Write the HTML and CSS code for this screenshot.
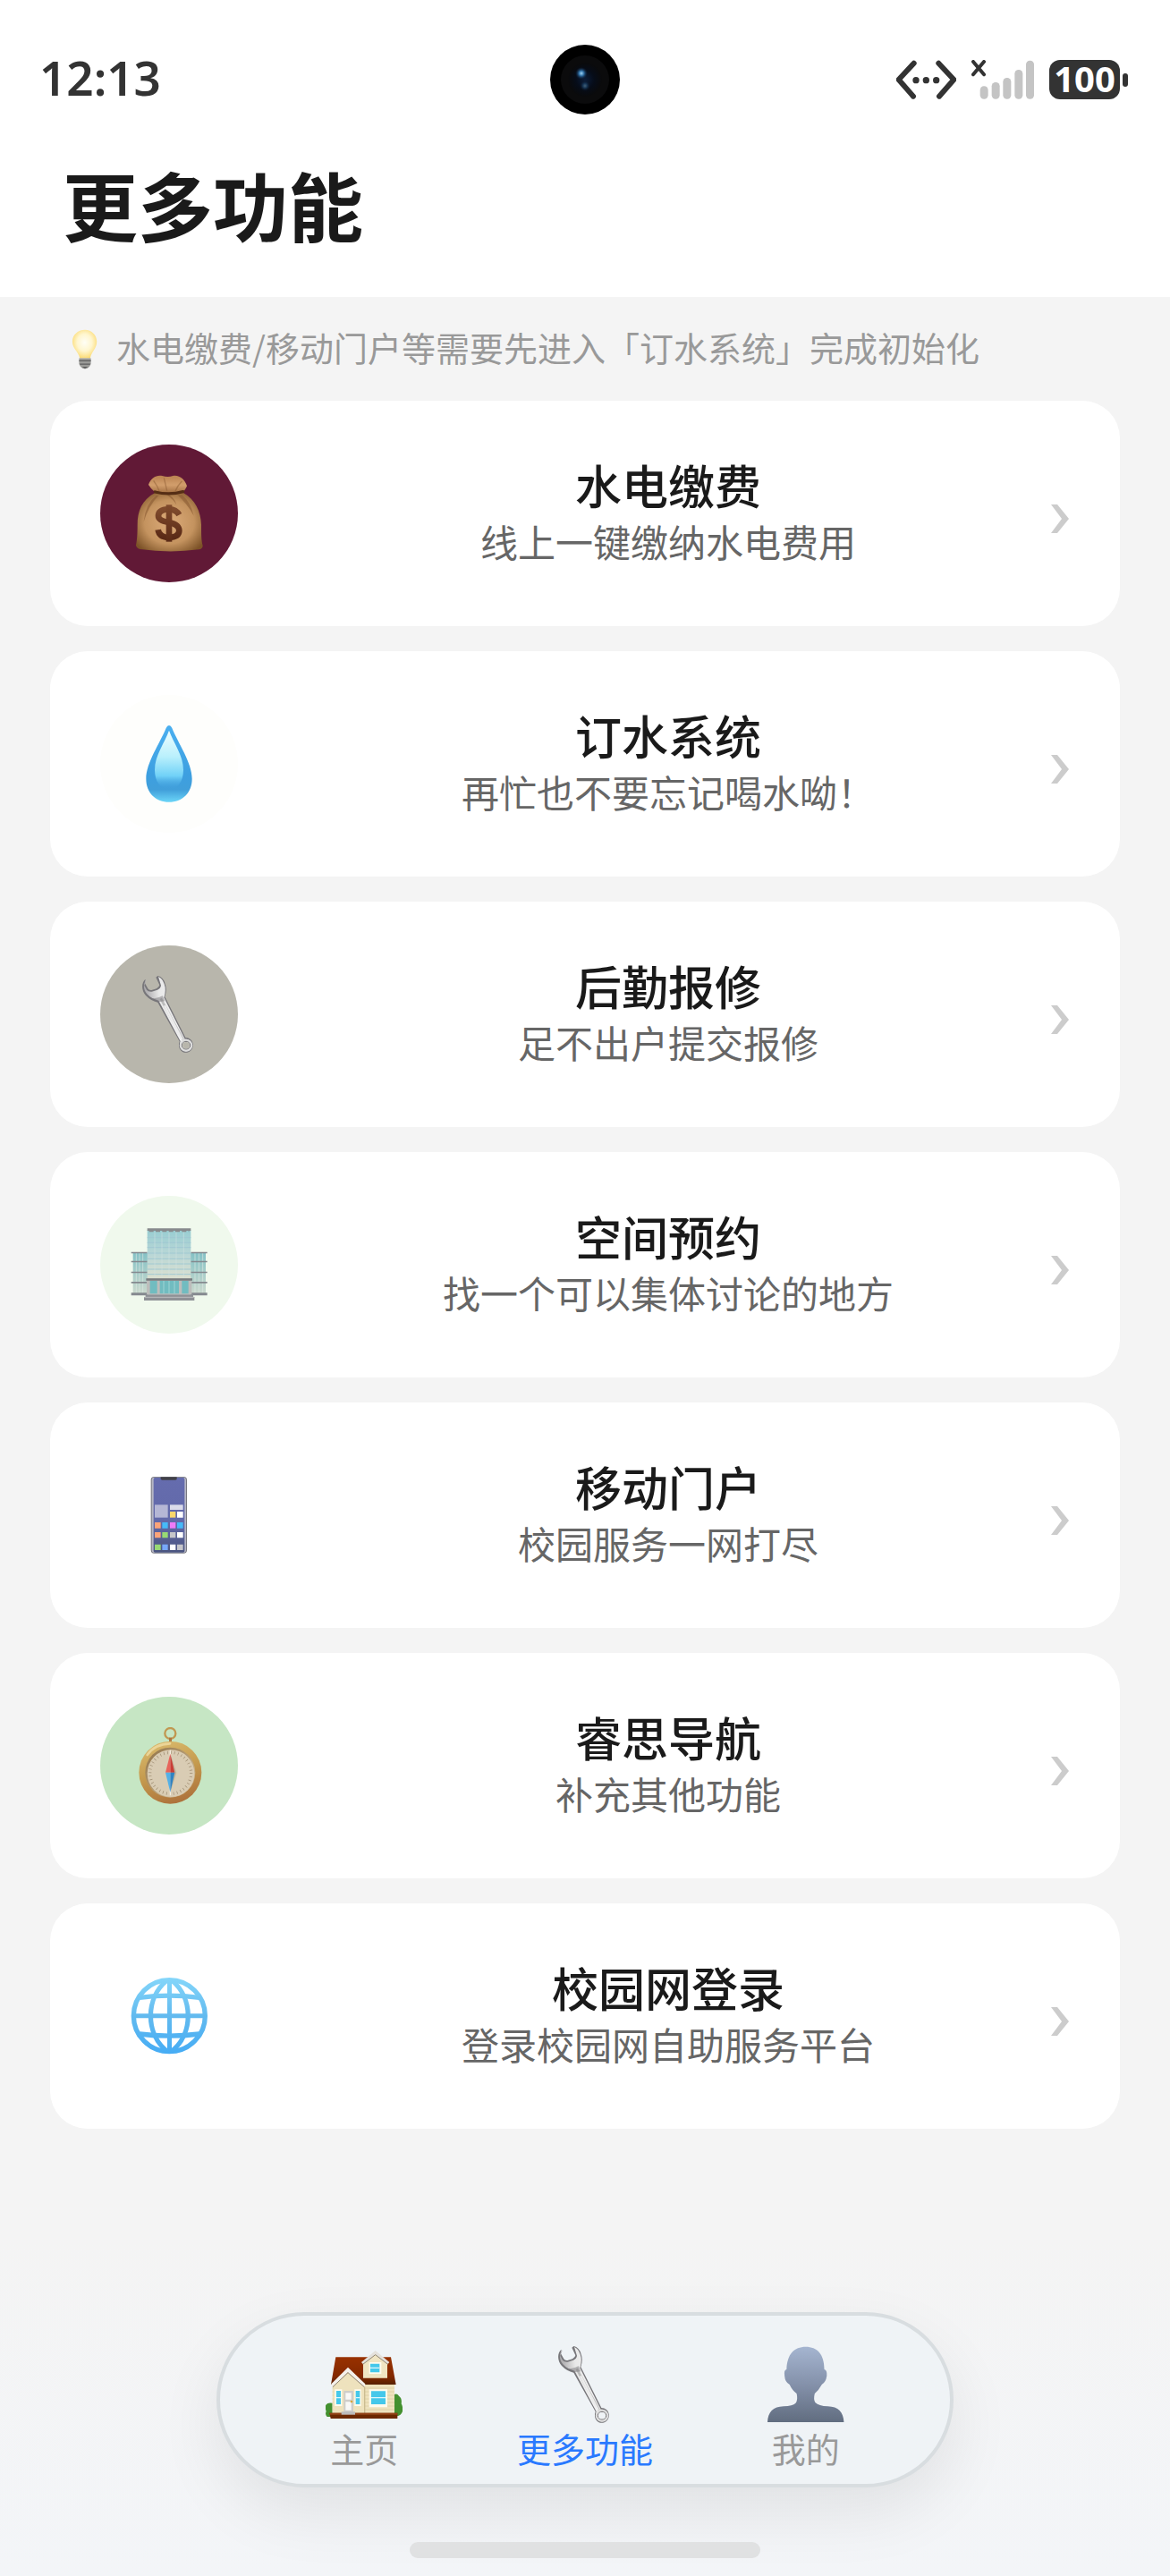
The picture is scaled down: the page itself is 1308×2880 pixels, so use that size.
FILE: index.html
```html
<!DOCTYPE html>
<html lang="zh-CN">
<head>
<meta charset="utf-8">
<meta name="viewport" content="width=device-width, initial-scale=1">
<title>更多功能</title>
<link rel="stylesheet" href="styles.css">
</head>
<body>
<header class="header">
  <div class="status">
    <span class="time">12:13</span>
    <svg class="camera" viewBox="0 0 78 78" aria-hidden="true">
      <defs>
        <radialGradient id="lens"><stop offset="0" stop-color="#0b1c38"/><stop offset=".55" stop-color="#060c18"/><stop offset="1" stop-color="#0a0a0b"/></radialGradient>
        <radialGradient id="glint"><stop offset="0" stop-color="#9fd4f5"/><stop offset=".4" stop-color="#2f6fa5"/><stop offset="1" stop-color="#0b1c38" stop-opacity="0"/></radialGradient>
      </defs>
      <circle cx="39" cy="39" r="39" fill="#000"/>
      <circle cx="39" cy="39" r="27" fill="#0b0b0c"/>
      <circle cx="39" cy="39" r="19" fill="url(#lens)"/>
      <circle cx="35" cy="32" r="7" fill="url(#glint)"/>
      <circle cx="39" cy="46" r="6" fill="url(#glint)" opacity=".4"/>
    </svg>
    <div class="indicators">
      <svg class="network" viewBox="66 80 201 132" aria-hidden="true">
        <path d="M125 91 74 146 123 202M208 91 259 146 210 202" fill="none" stroke="#333" stroke-width="18" stroke-linecap="round" stroke-linejoin="round"/>
        <g fill="#333"><circle cx="132" cy="148" r="11"/><circle cx="166" cy="148" r="11"/><circle cx="200" cy="148" r="11"/></g>
      </svg>
      <svg class="signal" viewBox="318 80 210 132" aria-hidden="true">
        <path d="M324 86 360 129M360 86 324 129" stroke="#333" stroke-width="12" stroke-linecap="round"/>
        <g fill="#c4c4c4"><rect x="347" y="168" width="27" height="43" rx="13"/><rect x="386" y="155" width="27" height="56" rx="13"/><rect x="424" y="140" width="27" height="71" rx="13"/><rect x="463" y="113" width="27" height="98" rx="13"/><rect x="501" y="82" width="27" height="129" rx="13"/></g>
      </svg>
      <div class="battery"><span class="battery-level">100</span><span class="battery-tip"></span></div>
    </div>
  </div>
  <h1 class="page-title">更多功能</h1>
</header>

<main class="content">
  <p class="hint">
    <svg class="bulb" viewBox="90 1105 46 136" preserveAspectRatio="none" aria-hidden="true">
      <defs><radialGradient id="bulbGlow" cx=".5" cy=".45" r=".6"><stop offset="0" stop-color="#fffef6"/><stop offset=".5" stop-color="#fff6cf"/><stop offset="1" stop-color="#fbd766"/></radialGradient></defs>
      <path d="M113 1107C103 1107 96 1125 96 1147C96 1170 104 1180 106 1203H120C122 1180 129 1170 129 1147C129 1125 122 1107 113 1107Z" fill="url(#bulbGlow)"/>
      <path d="M105 1203H121V1222Q119 1238 113 1239Q107 1238 105 1222Z" fill="#9b9b98"/>
      <path d="M105 1210H121V1214H105ZM106 1221H120V1225H106ZM109 1232H117L113 1239Z" fill="#5e5e5e"/>
    </svg>
    <span>水电缴费/移动门户等需要先进入「订水系统」完成初始化</span>
  </p>

  <ul class="cards">
    <li><a class="card" href="#pay">
      <span class="badge badge-wine"><svg class="emoji" viewBox="168 153 258 258" aria-hidden="true">
        <defs>
          <radialGradient id="bag" cx=".5" cy=".5" r=".62"><stop offset="0" stop-color="#dcab7a"/><stop offset=".6" stop-color="#c4935f"/><stop offset="1" stop-color="#7c5227"/></radialGradient>
          <linearGradient id="bagTop" x1="0" y1="0" x2="0" y2="1"><stop offset="0" stop-color="#b98250"/><stop offset=".5" stop-color="#d29e6c"/><stop offset="1" stop-color="#9b683b"/></linearGradient>
          <linearGradient id="dollar" x1="0" y1="0" x2="0" y2="1"><stop offset="0" stop-color="#7f4a2c"/><stop offset="1" stop-color="#5a2a16"/></linearGradient>
        </defs>
        <path d="M250 213C206 236 191 275 191 320C191 350 190 370 186 388Q186 398 200 402Q298 416 398 403Q410 400 410 390C405 372 405 350 405 320C404 276 384 234 345 213Z" fill="url(#bag)"/>
        <path d="M254 222Q218 250 212 310Q229 255 262 222ZM340 220Q370 245 380 290Q358 250 325 220ZM298 220Q318 235 322 254Q314 238 290 220Z" fill="#8a5c33" opacity=".6"/>
        <path d="M228 186C235 164 254 152 274 156Q293 162 310 156C332 152 350 168 357 190Q354 198 343 213Q298 224 251 212Q236 200 228 186Z" fill="url(#bagTop)"/>
        <path d="M245 172Q258 190 264 206M280 163L290 206M340 174Q326 188 318 207" fill="none" stroke="#8b5c32" stroke-width="4" opacity=".5"/>
        <path d="M250 210Q298 222 344 209" fill="none" stroke="#552e15" stroke-width="10" stroke-linecap="round"/>
        <path d="M331 287Q320 267 295 268Q261 269 261 291Q261 306 296 312Q331 319 331 340Q330 362 295 363Q264 362 260 337" fill="none" stroke="url(#dollar)" stroke-width="20"/>
        <path d="M287 253H307V377H287Z" fill="url(#dollar)"/>
      </svg></span>
      <span class="card-text"><span class="card-title">水电缴费</span><span class="card-sub">线上一键缴纳水电费用</span></span>
      <svg class="chevron" viewBox="0 0 22 32" aria-hidden="true"><path d="M1 0H8L21 16 8 32H1L13 16Z" fill="#ccc"/></svg>
    </a></li>

    <li><a class="card" href="#water">
      <span class="badge badge-ivory"><svg class="emoji" viewBox="168 93 258 258" aria-hidden="true">
        <defs>
          <linearGradient id="dropOuter" x1="0" y1="0" x2="0" y2="1"><stop offset="0" stop-color="#4aaff0"/><stop offset=".65" stop-color="#3d9fe0"/><stop offset=".84" stop-color="#419fda"/><stop offset="1" stop-color="#6bd5f8"/></linearGradient>
          <linearGradient id="dropInner" x1="0" y1="0" x2="0" y2="1"><stop offset="0" stop-color="#f0feff"/><stop offset=".45" stop-color="#b9f0fc"/><stop offset=".78" stop-color="#70d1f7"/><stop offset="1" stop-color="#429fdd" stop-opacity="0"/></linearGradient>
        </defs>
        <path d="M297 93Q303 93 307 102C327 152 374 218 374 272C374 320 341 350 297 350C253 350 220 320 220 272C220 218 267 152 287 102Q291 93 297 93Z" fill="url(#dropOuter)"/>
        <path d="M297 110C311 150 345 193 345 242C345 283 325 306 297 306C269 306 249 283 249 242C249 193 283 150 297 110Z" fill="url(#dropInner)"/>
      </svg></span>
      <span class="card-text"><span class="card-title">订水系统</span><span class="card-sub">再忙也不要忘记喝水呦！</span></span>
      <svg class="chevron" viewBox="0 0 22 32" aria-hidden="true"><path d="M1 0H8L21 16 8 32H1L13 16Z" fill="#ccc"/></svg>
    </a></li>

    <li><a class="card" href="#repair">
      <span class="badge badge-stone"><svg class="emoji" viewBox="168 153 258 258" aria-hidden="true">
        <defs>
          <linearGradient id="steel" x1="0" y1=".2" x2="1" y2="0"><stop offset="0" stop-color="#a5a4a7"/><stop offset=".3" stop-color="#e8e8e8"/><stop offset=".65" stop-color="#f3f3f3"/><stop offset="1" stop-color="#b5b4b5"/></linearGradient>
          <symbol id="wrench" viewBox="168 153 258 258">
            <path d="M218 164C204 175 203 201 219 219Q236 237 259 242L332 373C326 389 333 406 348 410C365 413 380 398 377 381C375 368 365 361 352 360L283 223Q291 199 284 180Q278 157 259 153L253 158L265 184Q264 191 255 196L238 201Q230 202 226 196L216 178Z" fill="#77767a"/>
            <path d="M222 165C210 177 209 199 223 214Q237 230 262 236L335 372C330 387 337 403 350 406C364 408 376 397 374 383C372 371 363 365 350 365L280 226Q288 200 281 181Q275 162 261 156L270 185Q269 195 258 200L239 206Q227 207 222 200L214 185Z" fill="url(#steel)"/>
            <path d="M269 229L344 367" stroke="#bbb" stroke-width="8"/>
            <path d="M282 253L341 367" stroke="#ececec" stroke-width="7"/>
            <path d="M235 227Q255 232 275 220L283 238L264 240Z" fill="#77767a" opacity=".5"/>
            <ellipse cx="354" cy="386" rx="18" ry="17" fill="none" stroke="#ddd" stroke-width="8"/>
            <ellipse cx="354" cy="386" rx="14" ry="13" fill="none" stroke="#747376" stroke-width="3"/>
            <ellipse cx="354" cy="386" rx="12" ry="11" fill="var(--hole)"/>
          </symbol>
        </defs>
        <use href="#wrench" x="168" y="153" width="258" height="258"/>
      </svg></span>
      <span class="card-text"><span class="card-title">后勤报修</span><span class="card-sub">足不出户提交报修</span></span>
      <svg class="chevron" viewBox="0 0 22 32" aria-hidden="true"><path d="M1 0H8L21 16 8 32H1L13 16Z" fill="#ccc"/></svg>
    </a></li>

    <li><a class="card" href="#space">
      <span class="badge badge-mint"><svg class="emoji" viewBox="168 153 258 258" aria-hidden="true">
        <defs>
          <linearGradient id="tower" x1="0" y1="0" x2="0" y2="1"><stop offset="0" stop-color="#98cdd2"/><stop offset=".5" stop-color="#b9d7d6"/><stop offset="1" stop-color="#dce0cf"/></linearGradient>
          <linearGradient id="wing" x1="0" y1="0" x2="0" y2="1"><stop offset="0" stop-color="#84c1c5"/><stop offset="1" stop-color="#cad9cd"/></linearGradient>
        </defs>
        <path d="M176 242H420V378H176Z" fill="url(#wing)"/>
        <path d="M187 242V378M198 242V378M209 242V378M384 242V378M397 242V378M410 242V378" stroke="#e0eae5" stroke-width="3" opacity=".6"/>
        <path d="M170 239H224V244H170ZM170 269H224V274H170ZM170 305H224V310H170ZM170 339H224V344H170ZM170 376H224V385H170ZM370 239H425V244H370ZM370 269H425V274H370ZM370 305H425V310H370ZM370 339H425V344H370ZM370 376H425V385H370Z" fill="#85898f"/>
        <path d="M224 166H370V330H224Z" fill="url(#tower)"/>
        <path d="M224 191H370M224 208H370M224 224H370M224 243H370M224 262H370M224 279H370M224 297H370M224 314H370" stroke="#a0c8d2" stroke-width="3"/>
        <path d="M249 172V326M273 172V326M297 172V326M321 172V326M346 172V326" stroke="#d4e4e4" stroke-width="3" opacity=".5"/>
        <path d="M224 160H370V168H224Z" fill="#878a8d"/>
        <path d="M230 170H364" stroke="#878a8d" stroke-width="4" stroke-dasharray="15 7"/>
        <path d="M222 328H373V382H222Z" fill="#bdbdbb"/>
        <path d="M220 328H375V335H220Z" fill="#777b7e"/>
        <path d="M233 336H257V379H233ZM266 336H330V379H266ZM340 336H362V379H340Z" fill="#71bcc0"/>
        <path d="M279 336V379M297 336V379M315 336V379" stroke="#a0d4d5" stroke-width="3"/>
        <path d="M218 382H378V390H382V402H213V390H218Z" fill="#8f9196"/>
        <path d="M214 391H382" stroke="#bcbdbe" stroke-width="3"/>
      </svg></span>
      <span class="card-text"><span class="card-title">空间预约</span><span class="card-sub">找一个可以集体讨论的地方</span></span>
      <svg class="chevron" viewBox="0 0 22 32" aria-hidden="true"><path d="M1 0H8L21 16 8 32H1L13 16Z" fill="#ccc"/></svg>
    </a></li>

    <li><a class="card" href="#portal">
      <span class="badge"><svg class="emoji" viewBox="168 153 258 258" aria-hidden="true">
        <defs><linearGradient id="screen" x1="0" y1="0" x2="0" y2="1"><stop offset="0" stop-color="#656cae"/><stop offset=".6" stop-color="#6269a9"/><stop offset="1" stop-color="#4b557f"/></linearGradient></defs>
        <rect x="236" y="153" width="121" height="257" rx="11" fill="#77777f"/>
        <rect x="239" y="155" width="115" height="253" rx="9" fill="#b5b6c4"/>
        <rect x="245" y="156" width="104" height="251" rx="5" fill="url(#screen)"/>
        <path d="M269 154H323V160Q323 164 318 164H274Q269 164 269 160Z" fill="#414148"/>
        <path d="M249 247H293V290H249Z" fill="#b5b7d5"/><path d="M300 247H344V264H300Z" fill="#dadbea"/>
        <path d="M300 270H319V290H300Z" fill="#fbd76b"/>
        <path d="M324 270H344V290H324ZM324 339H344V358H324ZM300 380H319V399H300Z" fill="#fff"/>
        <path d="M249 306H269V326H249ZM249 339H269V358H249Z" fill="#fba47a"/>
        <path d="M274 306H293V326H274ZM324 306H344V326H324Z" fill="#46baf8"/>
        <path d="M300 306H319V326H300Z" fill="#ef7cf8"/>
        <path d="M274 339H293V358H274ZM249 380H269V399H249Z" fill="#98da74"/>
        <path d="M300 339H319V358H300ZM324 380H344V399H324Z" fill="#c6c6ca"/>
        <path d="M274 380H293V399H274Z" fill="#77a8fa"/>
      </svg></span>
      <span class="card-text"><span class="card-title">移动门户</span><span class="card-sub">校园服务一网打尽</span></span>
      <svg class="chevron" viewBox="0 0 22 32" aria-hidden="true"><path d="M1 0H8L21 16 8 32H1L13 16Z" fill="#ccc"/></svg>
    </a></li>

    <li><a class="card" href="#nav">
      <span class="badge badge-green"><svg class="emoji" viewBox="168 153 258 258" aria-hidden="true">
        <defs>
          <linearGradient id="brass" x1=".3" y1="0" x2=".6" y2="1"><stop offset="0" stop-color="#d9b96c"/><stop offset=".5" stop-color="#c49a4e"/><stop offset="1" stop-color="#ad713b"/></linearGradient>
          <linearGradient id="rim" x1="0" y1="0" x2="1" y2="1"><stop offset="0" stop-color="#8f7146"/><stop offset="1" stop-color="#dbc7a2"/></linearGradient>
        </defs>
        <circle cx="301" cy="174" r="18" fill="none" stroke="#c19852" stroke-width="7"/>
        <path d="M297 188H306V204H297Z" fill="#ae7540"/>
        <circle cx="301" cy="305" r="105" fill="url(#brass)"/>
        <path d="M224 246Q250 209 300 208" fill="none" stroke="#f3e3ac" stroke-width="8" stroke-linecap="round" opacity=".7"/>
        <circle cx="301" cy="305" r="84" fill="url(#rim)"/>
        <circle cx="303" cy="308" r="79" fill="#d9ccb4"/>
        <circle cx="302" cy="307" r="69" fill="none" stroke="#9d8b70" stroke-width="10" stroke-dasharray="2 10"/>
        <path d="M304 250L322 306L303 366Z" fill="#a99b84" opacity=".5"/>
        <path d="M301 230V382" stroke="#f5eedf" stroke-width="4"/>
        <path d="M301 242L285 305H301Z" fill="#e7645b"/><path d="M301 242L316 305H301Z" fill="#c93d36"/>
        <path d="M301 371L285 305H301Z" fill="#55b0e6"/><path d="M301 371L316 305H301Z" fill="#2f82c2"/>
      </svg></span>
      <span class="card-text"><span class="card-title">睿思导航</span><span class="card-sub">补充其他功能</span></span>
      <svg class="chevron" viewBox="0 0 22 32" aria-hidden="true"><path d="M1 0H8L21 16 8 32H1L13 16Z" fill="#ccc"/></svg>
    </a></li>

    <li><a class="card" href="#login">
      <span class="badge"><svg class="emoji" viewBox="168 153 258 258" aria-hidden="true">
        <defs><linearGradient id="globe" gradientUnits="userSpaceOnUse" x1="0" y1="153" x2="0" y2="411"><stop offset="0" stop-color="#84d6fa"/><stop offset=".5" stop-color="#62baef"/><stop offset="1" stop-color="#45acf5"/></linearGradient></defs>
        <g fill="none" stroke="url(#globe)" stroke-width="16">
          <circle cx="298" cy="281" r="120"/>
          <path d="M290 162C217 222 217 340 290 400M306 162C379 222 379 340 306 400"/>
          <path d="M198 220Q298 207 398 220M198 342Q298 355 398 342"/>
          <path d="M177 274H419V289H177ZM291 160H306V402H291Z" fill="url(#globe)" stroke="none"/>
        </g>
      </svg></span>
      <span class="card-text"><span class="card-title">校园网登录</span><span class="card-sub">登录校园网自助服务平台</span></span>
      <svg class="chevron" viewBox="0 0 22 32" aria-hidden="true"><path d="M1 0H8L21 16 8 32H1L13 16Z" fill="#ccc"/></svg>
    </a></li>
  </ul>
</main>

<footer class="footer">
  <nav class="tabbar" aria-label="主导航">
    <a class="tab" href="#home">
      <svg class="emoji" viewBox="69 69 258 258" aria-hidden="true">
        <defs><linearGradient id="roof" x1="0" y1="0" x2="0" y2="1"><stop offset="0" stop-color="#983100"/><stop offset=".7" stop-color="#832800"/><stop offset="1" stop-color="#572100"/></linearGradient></defs>
        <path d="M70 266Q76 257 92 260V306H74Q66 299 71 288Q66 275 70 266ZM298 232Q308 225 315 236Q326 244 323 262Q330 276 327 288Q322 302 308 304L296 300Z" fill="#43902f"/>
        <path d="M92 190H300V298H92Z" fill="#eee2bd"/>
        <path d="M92 210H300M92 222H300M92 234H300M92 246H300M92 258H300M92 270H300M92 282H300" stroke="#d9ca9e" stroke-width="2"/>
        <path d="M103 106H288L305 198H200L145 164L87 198Z" fill="url(#roof)"/>
        <path d="M195 124L236 94L276 124V176H195Z" fill="#f0e5c3"/>
        <path d="M189 123L236 84L283 123L278 129L236 97L194 129Z" fill="#e4e1dc"/>
        <path d="M194 130L236 98L278 130" fill="none" stroke="#8f8676" stroke-width="3"/>
        <path d="M95 198L145 156L198 200V293H95Z" fill="#eee2bd"/>
        <path d="M88 196L144 140L202 196L200 206L144 157L93 205Z" fill="#f5f1ec"/>
        <path d="M93 206L144 158L200 207" fill="none" stroke="#8f8471" stroke-width="3"/>
        <path d="M200 206V294" stroke="#cbbd92" stroke-width="4"/>
        <path d="M215 123H256V162H215ZM215 214H276V274H215ZM100 214H124V270H100ZM166 214H188V270H166Z" fill="#fffbed"/>
        <path d="M219 128H250V157H219ZM222 220H270V264H222ZM105 219H120V264H105ZM170 219H184V264H170Z" fill="#45c8ea"/>
        <path d="M219 142H250M222 242H270M105 242H120M170 242H184" stroke="#dff7fb" stroke-width="4"/>
        <path d="M130 219H162V293H130Z" fill="#cfcdc9"/>
        <path d="M136 226H155V248H136ZM136 256H155V284H136Z" fill="#f8f8f6"/>
        <circle cx="156" cy="255" r="4" fill="#d9a63b"/>
        <path d="M82 293H310V312H86Z" fill="#6c2800"/><path d="M82 293H310V299H83Z" fill="#934216"/>
        <path d="M122 289H168V299H122Z" fill="#bbb"/>
      </svg>
      <span>主页</span>
    </a>
    <a class="tab tab-active" href="#more" aria-current="page">
      <svg class="emoji" viewBox="168 153 258 258" aria-hidden="true"><use href="#wrench" x="168" y="153" width="258" height="258"/></svg>
      <span>更多功能</span>
    </a>
    <a class="tab" href="#me">
      <svg class="emoji" viewBox="1136 189 153 258" preserveAspectRatio="none" aria-hidden="true">
        <defs><linearGradient id="person" x1="0" y1="0" x2="0" y2="1"><stop offset="0" stop-color="#a5b5d0"/><stop offset=".5" stop-color="#8491aa"/><stop offset="1" stop-color="#616d80"/></linearGradient></defs>
        <path d="M1212 191C1189 191 1175 216 1174 267Q1168 270 1170 289Q1171 311 1180 318Q1185 337 1194 348Q1197 370 1192 380Q1186 390 1168 391C1147 392 1137 410 1136 444H1288C1287 410 1277 392 1256 391Q1238 390 1231 378Q1227 368 1230 348Q1238 337 1244 318Q1252 311 1254 289Q1255 270 1249 267C1249 216 1235 191 1212 191Z" fill="url(#person)"/>
      </svg>
      <span>我的</span>
    </a>
  </nav>
  <div class="home-indicator"></div>
</footer>
</body>
</html>
```
FILE: styles.css
```css
* { box-sizing: border-box; }

body {
  margin: 0;
  min-height: 100vh;
  display: flex;
  flex-direction: column;
  background: #f4f4f4;
  color: #1a1a1a;
  font-family: "Noto Sans CJK SC", "Noto Sans", sans-serif;
}

a { color: inherit; text-decoration: none; }
svg { display: block; flex: none; }

.header {
  padding: 50px 44px 42px;
  background: #fff;
}

.status {
  display: grid;
  grid-template-columns: 1fr 78px 1fr;
  align-items: center;
}

.time {
  padding-bottom: 4px;
  font: 600 53px/74px "Noto Sans", sans-serif;
  color: #333;
}

.camera { width: 78px; height: 78px; }

.indicators {
  display: flex;
  justify-content: flex-end;
  align-items: center;
  gap: 17px;
  padding-right: 3px;
}

.network { width: 67px; height: 44px; }
.signal { width: 70px; height: 44px; }
.battery { display: flex; align-items: center; gap: 3px; }

.battery-level {
  width: 79px;
  height: 44px;
  border-radius: 12px;
  background: #333;
  color: #fff;
  font: 700 40px/42px "Noto Sans", sans-serif;
  text-align: center;
}

.battery-tip {
  width: 6px;
  height: 15px;
  border-radius: 3px;
  background: #333;
}

.page-title {
  margin: 38px 0 0;
  padding-left: 26px;
  font-size: 84px;
  line-height: 124px;
  font-weight: 700;
}

.content { padding: 0 56px; }

.hint {
  display: flex;
  align-items: center;
  gap: 16px;
  height: 116px;
  margin: 0;
  padding-left: 20px;
  color: #999;
  font-size: 38px;
  line-height: 56px;
}

.hint span { padding-bottom: 4px; }

.bulb { width: 38px; height: 45px; }

.cards {
  display: flex;
  flex-direction: column;
  gap: 28px;
  margin: 0;
  padding: 0;
  list-style: none;
}

.card {
  display: flex;
  align-items: center;
  min-height: 252px;
  padding: 0 56px;
  border-radius: 42px;
  background: #fff;
}

.badge {
  display: grid;
  place-items: center;
  flex: none;
  width: 154px;
  height: 154px;
  border-radius: 50%;
}

.badge-wine { background: #611936; }
.badge-ivory { background: #fefefc; }
.badge-stone { background: #b8b6ac; --hole: #b8b6ac; }
.badge-mint { background: #f0f9ed; }
.badge-green { background: #c6e6c4; }

.emoji { width: 86px; height: 86px; }

.card-text {
  flex: 1;
  display: flex;
  flex-direction: column;
  align-items: center;
  margin-left: 54px;
  padding-bottom: 8px;
}

.card-title {
  font-size: 52px;
  line-height: 70px;
  font-weight: 500;
}

.card-sub {
  color: #666;
  font-size: 42px;
  line-height: 56px;
}

.chevron {
  width: 22px;
  height: 44px;
  padding-top: 12px;
}

.footer {
  display: flex;
  flex-direction: column;
  align-items: center;
  gap: 61px;
  margin-top: auto;
  padding: 84px 0 20px;
  background: linear-gradient(#f4f4f4, #f3f5f8);
}

.tabbar {
  display: grid;
  grid-template-columns: repeat(3, 1fr);
  width: 63%;
  height: 196px;
  padding: 34px 38px 0;
  border: 4px solid #d8dde0;
  border-radius: 98px;
  background: #eff3f6;
  box-shadow: 0 28px 70px rgba(0, 0, 0, .08);
}

.tab {
  --hole: #eff3f6;
  display: flex;
  flex-direction: column;
  align-items: center;
  color: #999;
  font-size: 38px;
  line-height: 56px;
}

.tab-active { color: #2979ff; }

.home-indicator {
  width: 30%;
  height: 18px;
  border-radius: 9px;
  background: #e0e1e2;
}
```
